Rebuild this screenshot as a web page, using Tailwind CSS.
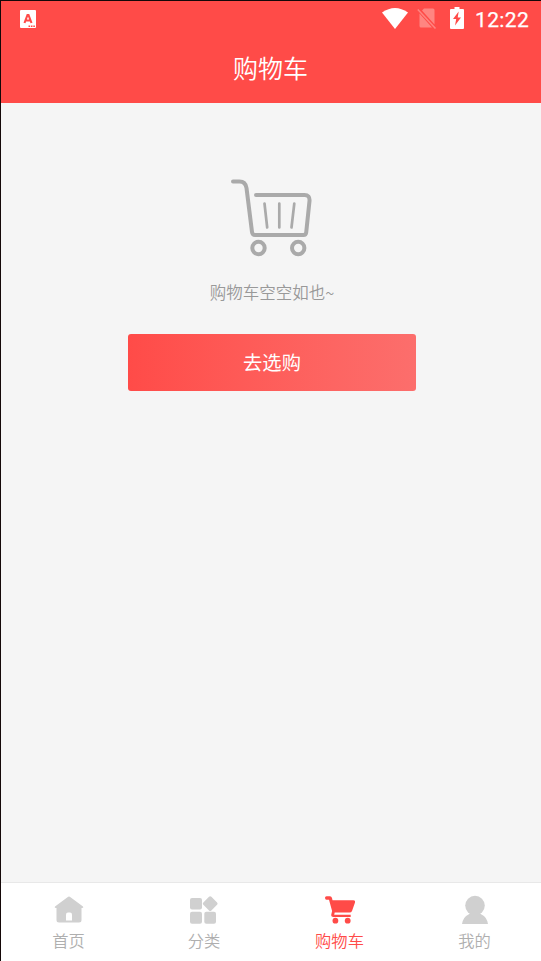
<!DOCTYPE html>
<html lang="zh-CN">
<head>
<meta charset="utf-8">
<title>购物车</title>
<script src="https://cdn.jsdelivr.net/npm/@tailwindcss/browser@4"></script>
</head>
<body class="w-[541px] h-[961px] overflow-hidden bg-[#f5f5f5] font-['Noto_Sans_CJK_SC',sans-serif] font-[350]">
<div class="flex flex-col w-full h-full border-l border-t border-[#140808]">
  <header class="flex flex-col h-[102px] shrink-0 bg-[#ff4b48] text-white">
    <div class="flex items-center h-[34px] pl-[19px] pr-[12px]">
      <svg class="mt-[2px] w-4 h-[18px]" viewBox="0 0 16 18"><rect width="16" height="18" rx="1" fill="#fff"/><path d="M4.500 13 7.500 5h1L11.500 13M5.500 10.500h5" fill="none" stroke="#ff4b48" stroke-width="2.100"/><path d="M8.500 16.200h1.600m.8 0h1.600m.8 0h1.600" stroke="#ff4b48" stroke-width="1.400"/></svg>
      <svg class="ml-auto w-[26px] h-[21px]" viewBox="0 0 26 21"><path d="M0 4.500Q13-4.500 26 4.500L13 21Z" fill="#fff"/></svg>
      <svg class="ml-[9px] mt-px w-5 h-[21px]" viewBox="0 0 20 21"><path d="M7 .5h9q1.500 0 1.500 1.500v14.500L5 2.500ZM2.500 5.500 15 19.500H4q-1.500 0-1.500-1.500Z" fill="#ff8581"/><path d="m.8 1.500 17.700 19" stroke="#ff8581" stroke-width="1.500"/></svg>
      <svg class="ml-[13px] w-[14px] h-[22px]" viewBox="0 0 14 22"><path d="M4.500 0h5v2H13q1 0 1 1v18q0 1-1 1H1q-1 0-1-1V3q0-1 1-1h3.500Z" fill="#fff"/><path d="M8.700 4.500 3 12h3.200L5 18.500 11 10.500H7.700Z" fill="#ff4b48"/></svg>
      <span class="ml-[11px] w-[54px] whitespace-nowrap font-['Roboto',sans-serif] font-normal text-[21px] leading-[24px] pt-[4px] tracking-[.35px] [-webkit-text-stroke:.25px_white]">12:22</span>
    </div>
    <h1 class="text-center text-[25px] leading-[36px] mt-[14px] pr-px font-[350]">购物车</h1>
  </header>
  <main class="flex flex-1 flex-col items-center pl-[2px]">
    <svg class="mt-[73px] -ml-[2px] w-[84px] h-[84px]" viewBox="229 176 84 84" fill="none" stroke="#aaa" stroke-linecap="round" stroke-linejoin="round">
      <path d="M233 181.500h6.500q6 0 7 6.500l5.500 44q.4 3 3 3h48.500q2.400 0 2.700-2.500L309.500 201q.5-6-5-6H256" stroke-width="4"/>
      <path d="m264.500 203.500 2.700 24M279.300 203.500v24M294.300 203.500l-2.800 24" stroke-width="2.700"/>
      <circle cx="258.500" cy="248" r="6.200" stroke-width="4"/><circle cx="298.200" cy="248" r="6.200" stroke-width="4"/>
    </svg>
    <p class="mt-[19px] text-[16.500px] leading-[26px] text-[#999]">购物车空空如也~</p>
    <button class="mt-[29px] w-[288px] h-[57px] rounded-[3px] bg-linear-to-r from-[#ff4b48] to-[#fc6e6c] text-white text-[19.300px] font-normal">去选购</button>
  </main>
  <nav class="grid grid-cols-4 h-[79px] shrink-0 border-t border-[#e8e8e8] bg-white text-[16.300px] leading-[24px] text-[#afafaf]">
    <div class="flex flex-col items-center pt-[12px]">
      <svg class="w-[30px] h-[30px]" viewBox="0 0 30 30"><path d="M13.500 2.200q1.500-1.200 3 0L29 11.500q1 1.300-.8 1.500H27.500v12q0 2.500-2.500 2.500H5Q2.500 27.500 2.500 25V13H1.800Q0 12.800 1 11.500Z" fill="#d0d0d0"/><path d="M12 25.500V19.500q0-2 2-2h2q2 0 2 2v6Z" fill="#fff"/></svg>
      <span class="mt-[3px]">首页</span>
    </div>
    <div class="flex flex-col items-center pt-[12px] pl-px">
      <svg class="w-[30px] h-[30px]" viewBox="0 0 30 30" fill="#d0d0d0"><rect x="1" y="3" width="12" height="11.500" rx="2"/><rect x="1" y="16.800" width="12" height="12" rx="2"/><rect x="15.300" y="16.800" width="11.700" height="12" rx="2"/><rect x="15.500" y="2.900" width="11.400" height="11.400" rx="1.700" transform="rotate(45 21.200 8.600)"/></svg>
      <span class="mt-[3px]">分类</span>
    </div>
    <div class="flex flex-col items-center pt-[12px] pl-[2px] text-[#ff4b48]">
      <svg class="w-[30px] h-[30px]" viewBox="0 0 30 30" fill="#ff4b48"><path d="M0 2.800Q0 1.300 1.500 1.300H5q1.500 0 2 1.600L7.500 5.300h20.800q2.300 0 1.700 2.200l-3 8.500q-.6 1.500-2.500 1.500H9.700l-.5 2.200h16.500v2.300H8.200q-2.500 0-1.900-2.500l.8-3.500L4 4.700H1.500Q0 4.700 0 2.800Z"/><circle cx="10.400" cy="25.700" r="2.900"/><circle cx="22.700" cy="25.700" r="2.900"/></svg>
      <span class="mt-[3px]">购物车</span>
    </div>
    <div class="flex flex-col items-center pt-[12px] pl-[2px]">
      <svg class="w-[30px] h-[30px]" viewBox="0 0 30 30" fill="#d0d0d0"><circle cx="15" cy="10.600" r="9.800"/><path d="M10.500 17h9q0 1.500 2 2.400 5.500 2.600 6.500 9.600H2q1-7 6.500-9.600 2-.9 2-2.400Z"/></svg>
      <span class="mt-[3px]">我的</span>
    </div>
  </nav>
</div>
</body>
</html>
